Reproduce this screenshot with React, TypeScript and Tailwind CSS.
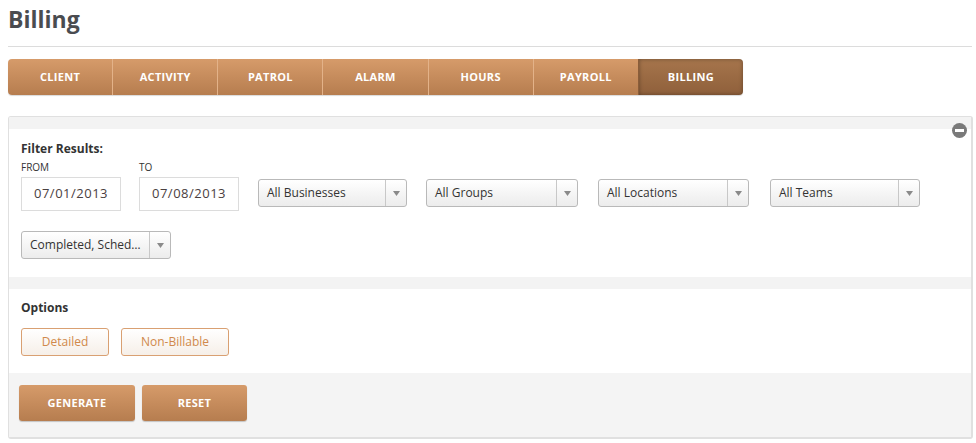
import { useState } from 'react';

const tabs = ['CLIENT', 'ACTIVITY', 'PATROL', 'ALARM', 'HOURS', 'PAYROLL', 'BILLING'];

const Select = ({ label, width }: { label: string; width: string }) => (
  <div
    className={`${width} h-[28px] flex items-stretch rounded-[3px] border border-[#b9b9b9] bg-gradient-to-b from-white to-[#ececec] text-[12px] text-[#333]`}
  >
    <div className="flex-1 flex items-center pl-[8px] truncate">{label}</div>
    <div className="w-[21px] border-l border-[#c8c8c8] flex items-center justify-center">
      <svg width="7" height="5" viewBox="0 0 7 5">
        <path d="M0 0 L7 0 L3.5 5 Z" fill="#8a8a8a" />
      </svg>
    </div>
  </div>
);

const App = () => {
  const [activeTab] = useState('BILLING');

  return (
    <div className="w-[976px] h-[443px] bg-white overflow-hidden font-['Open_Sans','Liberation_Sans',sans-serif]">
      <div className="px-[8px]">
        <h1 className="pt-[4px] h-[38px] text-[23px] font-bold text-[#4a4c50] leading-[30px]">Billing</h1>
        <div className="mt-[8px] border-t border-[#dcdcdc] w-[964px]" />

        <div className="mt-[12px] flex w-[735px] h-[36px] rounded-[4px] overflow-hidden shadow-[0_1px_1px_rgba(0,0,0,0.15)]">
          {tabs.map((tab, i) => (
            <div
              key={tab}
              className={`flex-1 flex items-center justify-center text-[11px] font-bold tracking-[0.3px] text-white ${
                i > 0 ? 'border-l border-[#e3b289]' : ''
              } ${
                tab === activeTab
                  ? 'bg-gradient-to-b from-[#a6754c] to-[#8f603b] shadow-[inset_0_0_4px_rgba(0,0,0,0.35)] border-l-[#8a5d3a]'
                  : 'bg-gradient-to-b from-[#d69b6a] to-[#b67d4f]'
              }`}
            >
              {tab}
            </div>
          ))}
        </div>

        <div className="mt-[21px] w-[965px] border-[2px] border-[#e0e0e0] border-t-[1px] border-l-[1px] rounded-[3px] overflow-hidden">
          <div className="h-[12px] bg-[#f3f3f3] relative">
            <div className="absolute right-[4px] top-[6px] w-[15px] h-[15px] rounded-full bg-[#7a7a7a] flex items-center justify-center">
              <div className="w-[9px] h-[3px] bg-white" />
            </div>
          </div>

          <div className="px-[12px] pt-[12px] pb-[18px]">
            <div className="text-[12px] font-bold text-[#333] leading-[16px]">Filter Results:</div>
            <div className="mt-[3px] flex items-end">
              <div className="flex flex-col mr-[18px]">
                <span className="text-[10px] text-[#333] leading-[14px] mb-[3px]">FROM</span>
                <div className="w-[100px] h-[34px] border border-[#dcdcdc] flex items-center justify-center text-[13px] tracking-[0.5px] text-[#4a4040]">
                  07/01/2013
                </div>
              </div>
              <div className="flex flex-col mr-[19px]">
                <span className="text-[10px] text-[#333] leading-[14px] mb-[3px]">TO</span>
                <div className="w-[100px] h-[34px] border border-[#dcdcdc] flex items-center justify-center text-[13px] tracking-[0.5px] text-[#4a4040]">
                  07/08/2013
                </div>
              </div>
              <div className="mb-[4px] mr-[19px]"><Select label="All Businesses" width="w-[149px]" /></div>
              <div className="mb-[4px] mr-[20px]"><Select label="All Groups" width="w-[152px]" /></div>
              <div className="mb-[4px] mr-[21px]"><Select label="All Locations" width="w-[151px]" /></div>
              <div className="mb-[4px]"><Select label="All Teams" width="w-[150px]" /></div>
            </div>
            <div className="mt-[20px]">
              <Select label="Completed, Sched…" width="w-[150px]" />
            </div>
          </div>

          <div className="h-[12px] bg-[#f3f3f3]" />

          <div className="px-[12px] pt-[11px] pb-[17px]">
            <div className="text-[12px] font-bold text-[#333] leading-[16px]">Options</div>
            <div className="mt-[12px] flex gap-[12px]">
              <button className="w-[88px] h-[28px] rounded-[3px] border border-[#d9a072] bg-gradient-to-b from-white to-[#f6efe8] text-[12px] text-[#d0894c]">
                Detailed
              </button>
              <button className="w-[108px] h-[28px] rounded-[3px] border border-[#d9a072] bg-gradient-to-b from-white to-[#f6efe8] text-[12px] text-[#d0894c]">
                Non-Billable
              </button>
            </div>
          </div>

          <div className="h-[64px] bg-[#f4f4f4] pl-[10px] pt-[12px] flex gap-[7px] items-start">
            <button className="w-[116px] h-[36px] rounded-[3px] bg-gradient-to-b from-[#d69b6a] to-[#b67d4f] shadow-[0_1px_1px_rgba(0,0,0,0.2)] text-white text-[11px] font-bold tracking-[0.3px]">
              GENERATE
            </button>
            <button className="w-[105px] h-[36px] rounded-[3px] bg-gradient-to-b from-[#d69b6a] to-[#b67d4f] shadow-[0_1px_1px_rgba(0,0,0,0.2)] text-white text-[11px] font-bold tracking-[0.3px]">
              RESET
            </button>
          </div>
        </div>
      </div>
    </div>
  );
};

export default App;
